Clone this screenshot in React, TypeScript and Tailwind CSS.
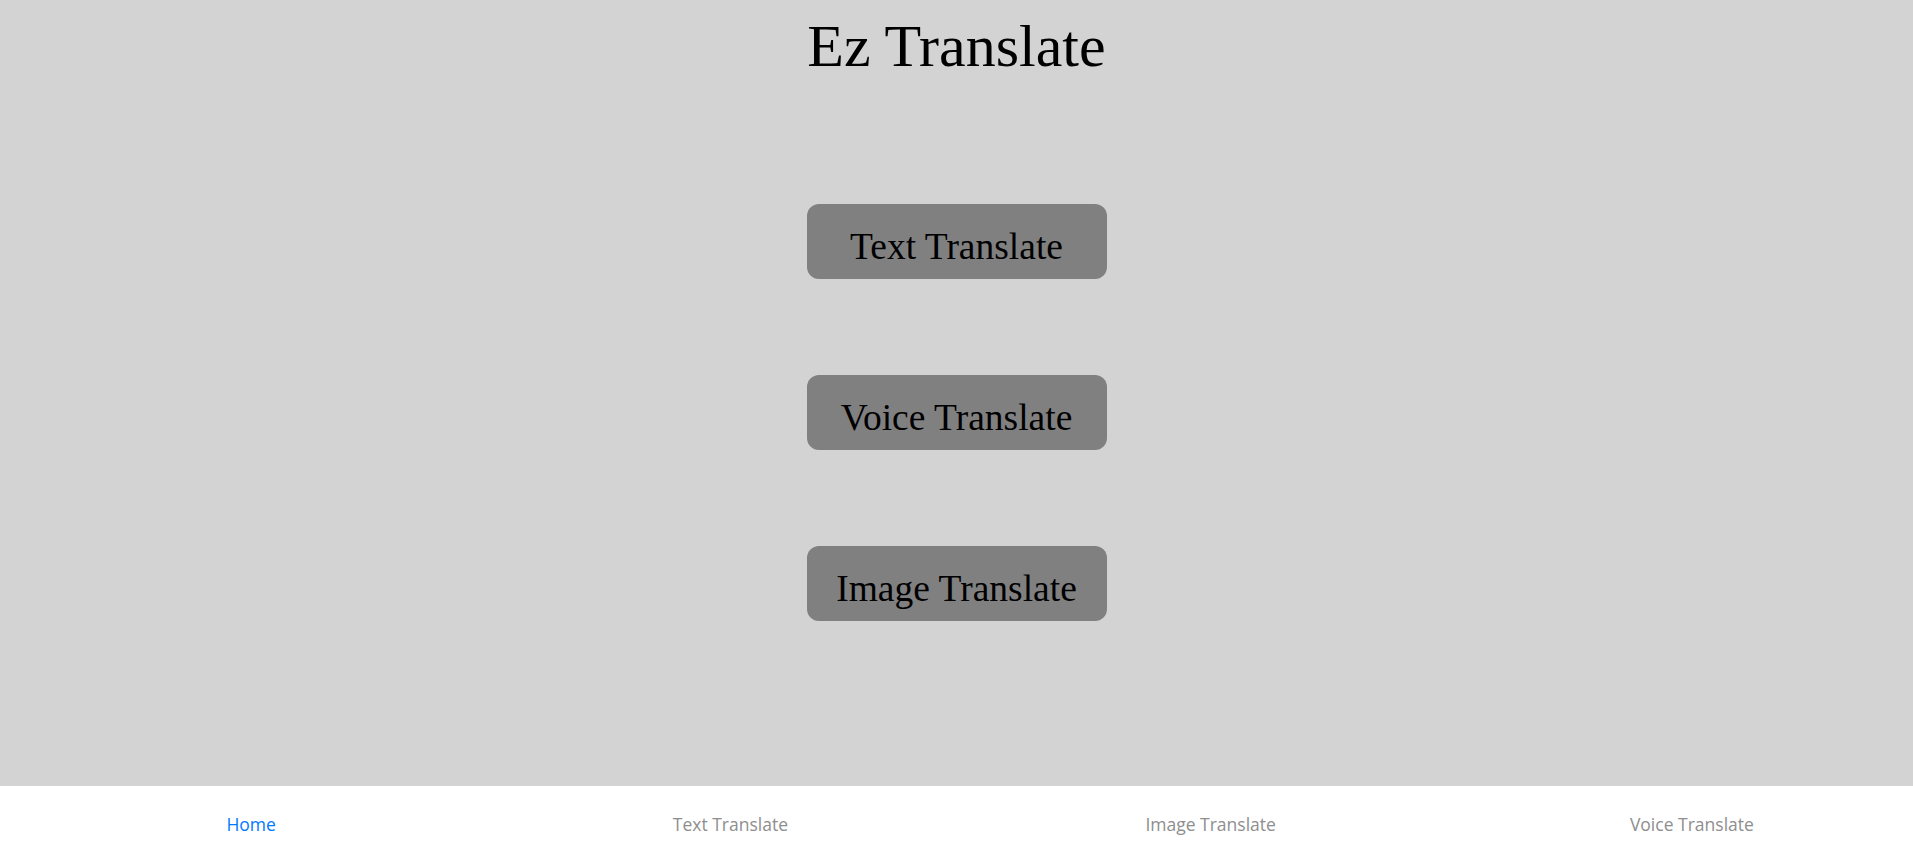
import React from "react";

const serif = { fontFamily: '"Liberation Serif", "Times New Roman", serif' };

function NavButton({ label }: { label: string }) {
  return (
    <button
      className="flex h-[75px] w-[300px] items-center justify-center rounded-[12px] bg-[#808080] pt-[10px] text-[37.5px] leading-[44px] text-black"
      style={serif}
    >
      {label}
    </button>
  );
}

export default function App() {
  const tabs = [
    { label: "Home", active: true },
    { label: "Text Translate", active: false },
    { label: "Image Translate", active: false },
    { label: "Voice Translate", active: false },
  ];
  return (
    <div className="flex h-[854px] w-full flex-col overflow-hidden">
      <main className="flex flex-1 flex-col items-center bg-[#d3d3d3]">
        <h1
          className="pt-[12px] text-[60px] leading-[68px] font-normal text-black"
          style={serif}
        >
          Ez Translate
        </h1>
        <div className="mt-[124px] flex flex-col items-center gap-[96px]">
          <NavButton label="Text Translate" />
          <NavButton label="Voice Translate" />
          <NavButton label="Image Translate" />
        </div>
      </main>
      <nav
        className="grid h-[68px] grid-cols-4 bg-white"
        style={{ fontFamily: '"Open Sans", "Noto Sans", sans-serif' }}
      >
        {tabs.map((t, i) => (
          <div
            key={t.label}
            className={
              "flex items-center justify-center pt-[8px] " +
              (i === 0 ? "pl-[24px]" : i === 1 ? "pl-[26px]" : i === 2 ? "pl-[30px]" : "pl-[36px]")
            }
          >
            <span
              className={
                "text-[17.5px] leading-[24px] " +
                (t.active ? "text-[#007aff]" : "text-[#8e8e8f]")
              }
            >
              {t.label}
            </span>
          </div>
        ))}
      </nav>
    </div>
  );
}
